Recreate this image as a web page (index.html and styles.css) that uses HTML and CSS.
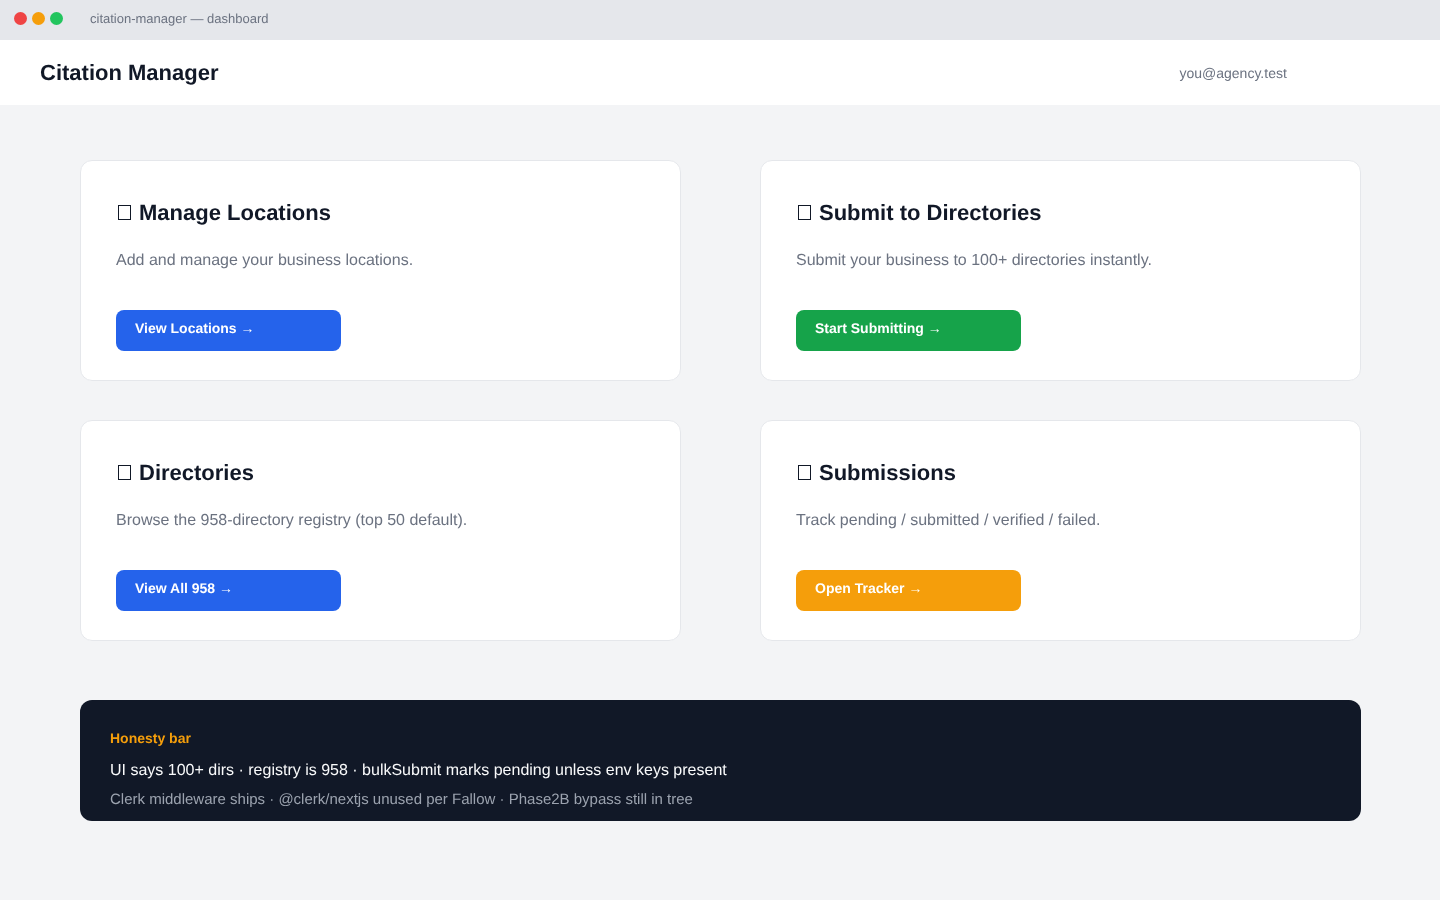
FILE: index.html
```html
<!DOCTYPE html>
<html lang="en">
<head>
  <meta charset="UTF-8">
  <title>citation-manager — dashboard</title>
  <link rel="stylesheet" href="styles.css">
</head>
<body>
<div class="titlebar">
  <div class="dots">
    <span class="dot dot_red"></span>
    <span class="dot dot_amber"></span>
    <span class="dot dot_green"></span>
  </div>
  <span class="titlebar_text">citation-manager — dashboard</span>
</div>
<header class="topbar">
  <h1 class="brand">Citation Manager</h1>
  <span class="user">you@agency.test</span>
</header>
<main class="content">
  <section class="cards">
    <div class="card">
      <h2 class="card_title"><span class="tofu"></span>Manage Locations</h2>
      <p class="card_text">Add and manage your business locations.</p>
      <a class="btn btn_blue" href="#">View Locations →</a>
    </div>
    <div class="card">
      <h2 class="card_title"><span class="tofu"></span>Submit to Directories</h2>
      <p class="card_text">Submit your business to 100+ directories instantly.</p>
      <a class="btn btn_green" href="#">Start Submitting →</a>
    </div>
    <div class="card">
      <h2 class="card_title"><span class="tofu"></span>Directories</h2>
      <p class="card_text">Browse the 958-directory registry (top 50 default).</p>
      <a class="btn btn_blue" href="#">View All 958 →</a>
    </div>
    <div class="card">
      <h2 class="card_title"><span class="tofu"></span>Submissions</h2>
      <p class="card_text">Track pending / submitted / verified / failed.</p>
      <a class="btn btn_amber" href="#">Open Tracker →</a>
    </div>
  </section>
  <section class="honesty">
    <div class="honesty_label">Honesty bar</div>
    <div class="honesty_main">UI says 100+ dirs · registry is 958 · bulkSubmit marks pending unless env keys present</div>
    <div class="honesty_sub">Clerk middleware ships · @clerk/nextjs unused per Fallow · Phase2B bypass still in tree</div>
  </section>
</main>
</body>
</html>
```

FILE: styles.css
```css
*{
  margin: 0;
  padding: 0;
  box-sizing: border-box;
}
body{
  background: #f3f4f6;
  font-family: "Liberation Sans", Arial, sans-serif;
  color: #111827;
  text-rendering: geometricPrecision;
  /*文字用灰度抗锯齿*/
  will-change: transform;
}
.titlebar{
  height: 40px;
  background: #e5e7eb;
  display: flex;
  align-items: center;
  padding: 0 14px 3px;
}
.dots{
  display: flex;
  gap: 5px;
}
.dot{
  width: 13px;
  height: 13px;
  border-radius: 50%;
}
.dot_red{
  background: #ef4444;
}
.dot_amber{
  background: #f59e0b;
}
.dot_green{
  background: #22c55e;
}
.titlebar_text{
  margin-left: 27px;
  font-size: 13px;
  color: #6b7280;
}
.topbar{
  height: 65px;
  background: #fff;
  display: flex;
  align-items: center;
  padding: 0 40px;
}
.brand{
  font-size: 22px;
  font-weight: 700;
  color: #111827;
}
.user{
  margin-left: 961px;
  font-size: 14px;
  color: #6b7280;
}
.content{
  padding: 55px 79px 0 80px;
}
.cards{
  display: grid;
  grid-template-columns: 601px 601px;
  grid-auto-rows: 221px;
  column-gap: 79px;
  row-gap: 39px;
}
.card{
  background: #fff;
  border: 1px solid #e5e7eb;
  border-radius: 12px;
  padding: 39px 35px 0;
}
.card_title{
  font-size: 22px;
  font-weight: 700;
  line-height: 25px;
  color: #111827;
}
/*缺字方框,参考图里emoji没有字体*/
.tofu{
  display: inline-block;
  width: 13px;
  height: 15px;
  margin: 0 8px 0 2px;
  border: 1px solid #111827;
}
.card_text{
  margin-top: 25px;
  font-size: 16px;
  line-height: 22px;
  color: #6b7280;
}
.btn{
  display: block;
  width: 225px;
  height: 41px;
  margin-top: 38px;
  padding: 10px 19px 0;
  border-radius: 8px;
  font-size: 14px;
  font-weight: 700;
  line-height: 17px;
  color: #fff;
  text-decoration: none;
}
.btn_blue{
  background: #2563eb;
}
.btn_green{
  background: #16a34a;
}
.btn_amber{
  background: #f59e0b;
}
.honesty{
  height: 121px;
  margin-top: 59px;
  padding: 30px 30px 0;
  background: #111827;
  border-radius: 12px;
}
.honesty_label{
  font-size: 14px;
  font-weight: 700;
  line-height: 16px;
  color: #f59e0b;
}
.honesty_main{
  margin-top: 15px;
  font-size: 16px;
  line-height: 20px;
  color: #f9fafb;
}
.honesty_sub{
  margin-top: 10px;
  font-size: 15px;
  line-height: 18px;
  color: #9ca3af;
}
```
